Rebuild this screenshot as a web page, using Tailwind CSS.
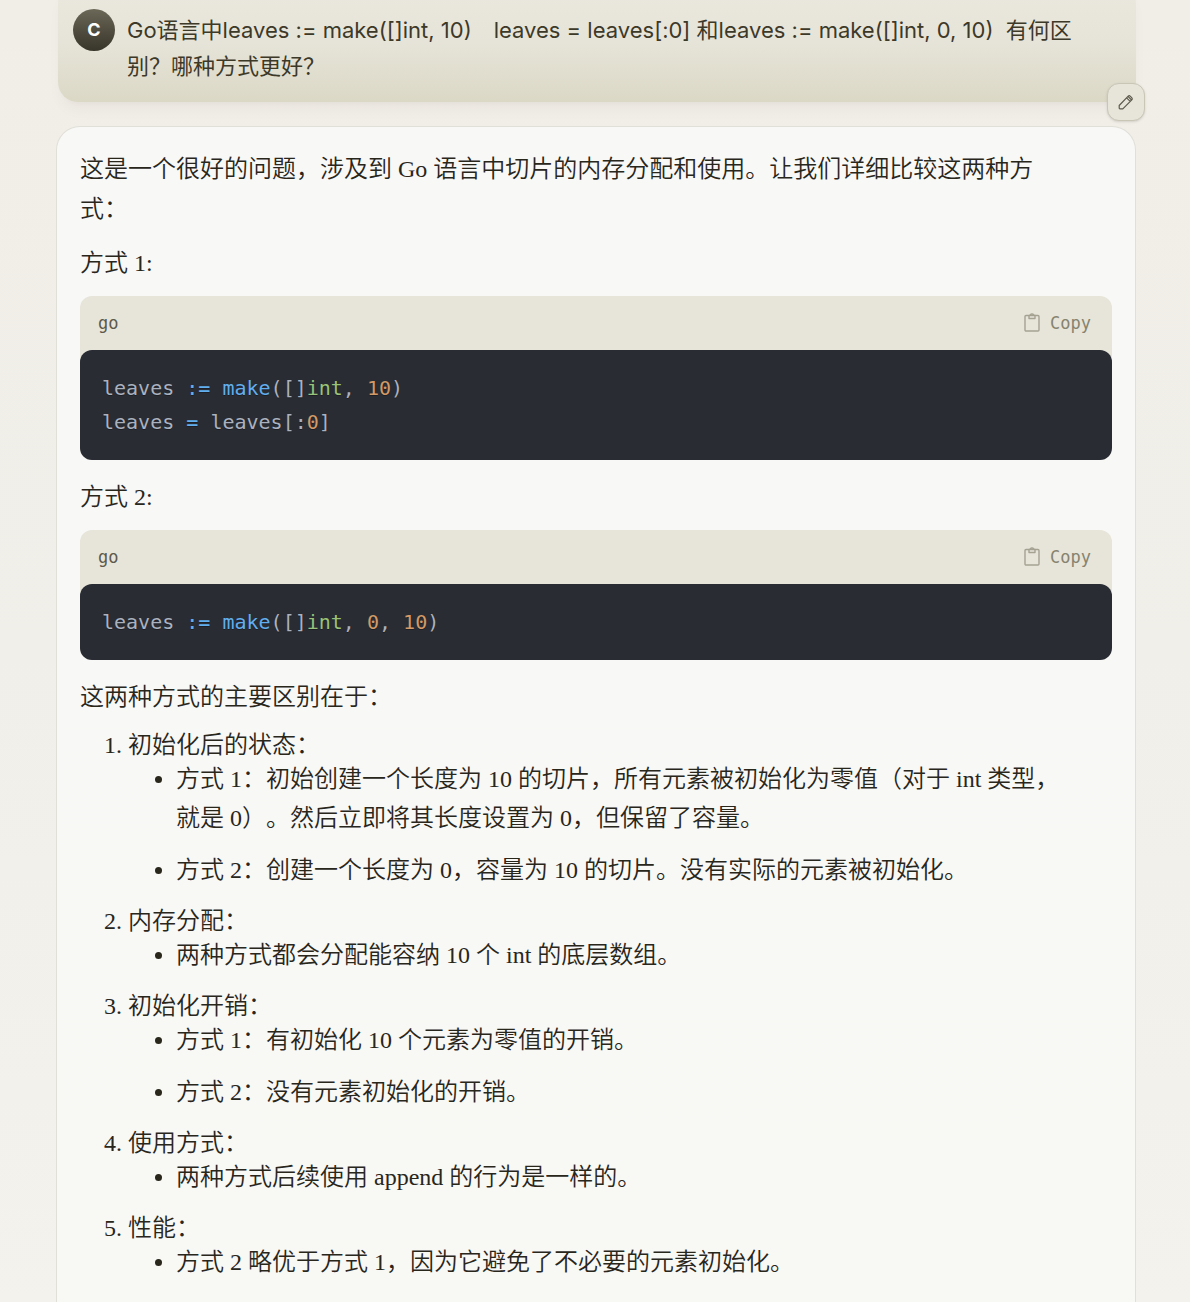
<!DOCTYPE html>
<html lang="zh-CN">
<head>
  <meta charset="UTF-8">
  <meta name="viewport" content="width=device-width, initial-scale=1.0">
  <title>Chat</title>
  <script src="https://cdn.jsdelivr.net/npm/@tailwindcss/browser@4"></script>
</head>
<body class="h-screen overflow-hidden bg-linear-to-b from-[#f1eee7] via-[#f0efe9] to-[#f3f2ed] pl-14 pr-[54px] text-[#29261b]">
  <main class="flex min-h-full flex-col gap-6">

    <!-- User message -->
    <section class="relative ml-0.5 -mt-4 flex shrink-0 gap-3 rounded-[20px] bg-linear-to-b from-[#ebe9df] via-[#e6e4d8] to-[#dbd8c6] px-[15px] pt-[25px] pb-[17px] shadow-lg shadow-[#29261b]/4">
      <div class="flex size-[42px] shrink-0 items-center justify-center rounded-full bg-linear-to-b from-[#6b6858] to-[#38352a] font-['Inter',sans-serif] text-lg font-bold text-white">C</div>
      <p class="pt-[3px] pb-px pr-12 font-['Inter','Noto_Sans_CJK_SC',sans-serif] text-[22px] leading-9 text-[#3d3929]">Go语言中leaves := make([]int, 10)&emsp;leaves = leaves[:0] 和leaves := make([]int, 0, 10)&nbsp; 有何区别？哪种方式更好？</p>
      <button type="button" aria-label="Edit" class="absolute -right-[9px] -bottom-[19px] flex size-[38px] items-center justify-center rounded-xl border border-[#c9c6b6] bg-[#e7e5da] text-[#5d5a4c] shadow-sm">
        <svg class="size-[18px]" viewBox="0 0 18 18" fill="none" stroke="currentColor" stroke-width="1.2" stroke-linejoin="round"><path d="M2.200 12.500 11.200 3.200q1-1 2-.1l1.700 1.700q.9 1-.1 2L5.800 15.800H2.900q-.7 0-.7-.7ZM9.600 4.800l3.600 3.600M11 3.400l3.600 3.600"/></svg>
      </button>
    </section>

    <!-- Assistant message -->
    <article class="grow rounded-t-[24px] border border-b-0 border-[#e0dfd8] bg-linear-to-b from-[#f8f8f7] to-[#f8f8f5] px-[23px] pt-[22px] font-['Liberation_Serif','Noto_Sans_CJK_SC',serif] text-2xl leading-10 font-[350] [text-spacing-trim:space-all]">
      <p class="pr-16">这是一个很好的问题，涉及到 Go 语言中切片的内存分配和使用。让我们详细比较这两种方式：</p>
      <p class="mt-[14px]">方式 1:</p>

      <div class="mt-[13px] rounded-xl bg-[#e7e5da] font-['DejaVu_Sans_Mono',monospace] font-normal">
        <div class="flex h-[54px] items-center justify-between pl-[18px] pr-[21px] text-[17px]">
          <span class="text-[#5d5a4c]">go</span>
          <button type="button" class="flex items-center gap-2 text-[#86836f]">
            <svg class="size-5" viewBox="0 0 20 20" fill="none" stroke="#a5a292" stroke-width="1.4" stroke-linejoin="round"><rect x="3" y="2.500" width="14" height="15.500" rx="1"/><path d="M7 2.500v3h6v-3c-.7 0-1.300-.2-1.500-.7-.4-1-2.600-1-3 0-.2.500-.8.7-1.500.7"/></svg>
            Copy
          </button>
        </div>
        <pre class="rounded-xl bg-[#292c33] px-[22px] py-[21px] font-['DejaVu_Sans_Mono',monospace] text-xl leading-[34px] text-[#abb2bf] text-shadow-[0_1px_rgba(0,0,0,0.3)]"><code class="font-['DejaVu_Sans_Mono',monospace]">leaves <span class="text-[#61afef]">:=</span> <span class="text-[#61afef]">make</span>([]<span class="text-[#98c379]">int</span>, <span class="text-[#d19a66]">10</span>)
leaves <span class="text-[#61afef]">=</span> leaves[:<span class="text-[#d19a66]">0</span>]</code></pre>
      </div>

      <p class="mt-[17px]">方式 2:</p>

      <div class="mt-[13px] rounded-xl bg-[#e7e5da] font-['DejaVu_Sans_Mono',monospace] font-normal">
        <div class="flex h-[54px] items-center justify-between pl-[18px] pr-[21px] text-[17px]">
          <span class="text-[#5d5a4c]">go</span>
          <button type="button" class="flex items-center gap-2 text-[#86836f]">
            <svg class="size-5" viewBox="0 0 20 20" fill="none" stroke="#a5a292" stroke-width="1.4" stroke-linejoin="round"><rect x="3" y="2.500" width="14" height="15.500" rx="1"/><path d="M7 2.500v3h6v-3c-.7 0-1.300-.2-1.500-.7-.4-1-2.600-1-3 0-.2.500-.8.7-1.500.7"/></svg>
            Copy
          </button>
        </div>
        <pre class="rounded-xl bg-[#292c33] px-[22px] py-[21px] font-['DejaVu_Sans_Mono',monospace] text-xl leading-[34px] text-[#abb2bf] text-shadow-[0_1px_rgba(0,0,0,0.3)]"><code class="font-['DejaVu_Sans_Mono',monospace]">leaves <span class="text-[#61afef]">:=</span> <span class="text-[#61afef]">make</span>([]<span class="text-[#98c379]">int</span>, <span class="text-[#d19a66]">0</span>, <span class="text-[#d19a66]">10</span>)</code></pre>
      </div>

      <p class="mt-[17px]">这两种方式的主要区别在于：</p>

      <ol class="mt-[14px] list-decimal space-y-[17px] pl-12 pr-12 leading-[29px]">
        <li>
          初始化后的状态：
          <ul class="list-disc space-y-[13px] pl-12 leading-[39px]">
            <li>方式 1：初始创建一个长度为 10 的切片，所有元素被初始化为零值（对于 int 类型，就是 0）。然后立即将其长度设置为 0，但保留了容量。</li>
            <li>方式 2：创建一个长度为 0，容量为 10 的切片。没有实际的元素被初始化。</li>
          </ul>
        </li>
        <li>
          内存分配：
          <ul class="list-disc space-y-[13px] pl-12 leading-[39px]">
            <li>两种方式都会分配能容纳 10 个 int 的底层数组。</li>
          </ul>
        </li>
        <li>
          初始化开销：
          <ul class="list-disc space-y-[13px] pl-12 leading-[39px]">
            <li>方式 1：有初始化 10 个元素为零值的开销。</li>
            <li>方式 2：没有元素初始化的开销。</li>
          </ul>
        </li>
        <li>
          使用方式：
          <ul class="list-disc space-y-[13px] pl-12 leading-[39px]">
            <li>两种方式后续使用 append 的行为是一样的。</li>
          </ul>
        </li>
        <li>
          性能：
          <ul class="list-disc space-y-[13px] pl-12 leading-[39px]">
            <li>方式 2 略优于方式 1，因为它避免了不必要的元素初始化。</li>
          </ul>
        </li>
      </ol>
    </article>
  </main>
</body>
</html>
